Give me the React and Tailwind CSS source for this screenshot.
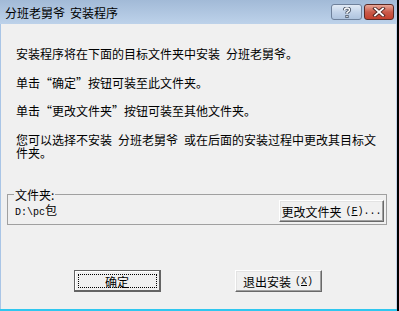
import React from 'react';

const cjk = "font-['Noto_Sans_CJK_SC','Noto_Sans_CJK_JP',sans-serif]";
const mono = "font-['Liberation_Mono',monospace]";

// 半角空格占位
const Sp = ({ w = 'w-[6px]' }) => <span className={`inline-block ${w}`} />;

// 经典风格按钮
const ClassicButton = ({ children, className = '' }) => (
  <button
    className={`h-[22px] bg-[#f0f0f0] border border-t-white border-l-white border-r-[#696969] border-b-[#696969] shadow-[inset_-1px_-1px_0_#a0a0a0,inset_1px_1px_0_#e3e3e3] flex items-center justify-center text-[12px] leading-[13px] text-black ${className}`}
  >
    {children}
  </button>
);

const TitleButtons = () => (
  <div className="flex gap-[2px] pt-[4px]">
    <div className="w-[31px] h-[16px] rounded-[3px] border border-[#6f819b] bg-gradient-to-b from-[#e2ebf6] via-[#c4d4e9] to-[#aec3de] flex items-center justify-center">
      <svg width="10" height="11" viewBox="0 0 10 11">
        <path d="M2.5 3.2 Q2.5 1 5 1 Q7.5 1 7.5 3 Q7.5 4.3 5.6 5.2 L5 5.6 V6.8" fill="none" stroke="#4a5566" strokeWidth="3.2" strokeLinejoin="round" />
        <rect x="3.4" y="8" width="3.2" height="3" fill="#4a5566" />
        <path d="M2.5 3.2 Q2.5 1 5 1 Q7.5 1 7.5 3 Q7.5 4.3 5.6 5.2 L5 5.6 V6.8" fill="none" stroke="#fff" strokeWidth="1.4" />
        <rect x="4.3" y="8.8" width="1.4" height="1.4" fill="#fff" />
      </svg>
    </div>
    <div className="w-[30px] h-[16px] rounded-[3px] border border-[#5a2a25] bg-gradient-to-b from-[#e8a899] via-[#c95a4a] to-[#c4402d] flex items-center justify-center">
      <svg width="14" height="10" viewBox="0 0 14 10">
        <path d="M3 1.5 L11 8.5 M11 1.5 L3 8.5" stroke="#4b2320" strokeWidth="3.6" strokeLinecap="square" />
        <path d="M3 1.5 L11 8.5 M11 1.5 L3 8.5" stroke="#fff" strokeWidth="1.8" strokeLinecap="square" />
      </svg>
    </div>
  </div>
);

const App = () => {
  return (
    <div className={`flex w-[399px] h-[311px] bg-black ${cjk}`} lang="zh-CN">
      <div className="w-[397px] h-[311px] flex flex-col">
        {/* 标题栏 */}
        <div className="h-[24px] bg-gradient-to-b from-[#a2bad7] to-[#bdd2ea] flex justify-between pr-[3px]">
          <div className="pl-[5px] pt-[6px] text-[12px] leading-[13px] text-black whitespace-nowrap">
            分班老舅爷<Sp w="w-[5px]" />安装程序
          </div>
          <TitleButtons />
        </div>

        {/* 客户区 */}
        <div className="flex-1 bg-[#f0f0f0] border-l border-l-[#a9c5e6] border-r border-r-[#c2d3e8] flex flex-col text-[12px] leading-[13px] text-black">
          <div className="pt-[23px] pl-[15px] pr-[8px]">
            <p className="mb-[16px]">安装程序将在下面的目标文件夹中安装<Sp />分班老舅爷。</p>
            <p className="mb-[15px]">单击“确定”按钮可装至此文件夹。</p>
            <p className="mb-[16px]">单击“更改文件夹”按钮可装至其他文件夹。</p>
            <p>
              您可以选择不安装<Sp />分班老舅爷<Sp />或在后面的安装过程中更改其目标文<br />件夹。
            </p>
          </div>

          {/* 文件夹分组框 */}
          <div className="relative mt-[35px] ml-[6px] w-[380px] border border-[#a0a0a0] pt-[5px] pb-[2px] pl-[7px] pr-[2px] flex items-center justify-between">
            <span className="absolute -top-[7px] left-[6px] px-[1px] bg-[#f0f0f0]">文件夹:</span>
            <span>
              <span className={`${mono} text-[10px]`}>D:\pc</span>包
            </span>
            <ClassicButton className="w-[105px]">
              更改文件夹<span className={`${mono} text-[10px] ml-[4px]`}>(<u>F</u>)...</span>
            </ClassicButton>
          </div>

          {/* 底部按钮 */}
          <div className="mt-[45px] flex justify-center gap-[74px] pr-[2px]">
            <button className="w-[87px] h-[22px] bg-[#f0f0f0] border border-[#646464] shadow-[inset_-1px_-1px_0_#646464,inset_1px_1px_0_#fff] p-[3px] text-[12px] leading-[13px]">
              <span className="flex h-full items-center justify-center border border-dotted border-black">确定</span>
            </button>
            <ClassicButton className="w-[87px]">
              退出安装<span className={`${mono} text-[10px] ml-[4px]`}>(<u>X</u>)</span>
            </ClassicButton>
          </div>
        </div>

        {/* 底边 */}
        <div className="h-[2px] bg-[#2fc7ef]" />
      </div>
      <div className="w-[2px]" />
    </div>
  );
};

export default App;
